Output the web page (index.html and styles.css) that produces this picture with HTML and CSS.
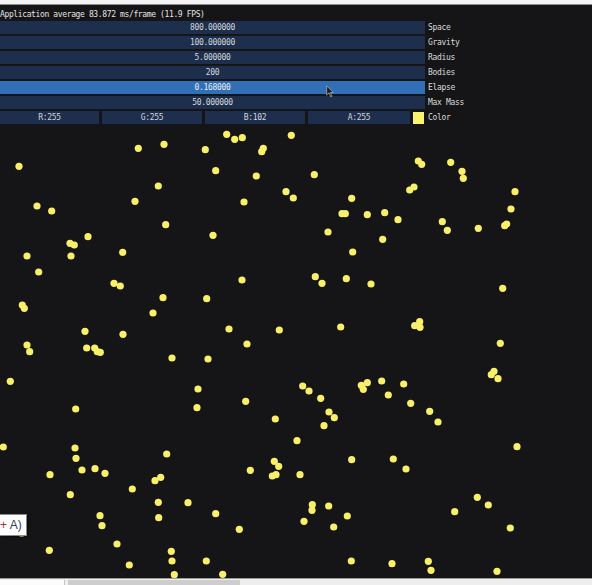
FILE: index.html
```html
<!DOCTYPE html>
<html>
<head>
<meta charset="utf-8">
<link rel="stylesheet" href="styles.css">
</head>
<body>
<div class="topbar"></div>
<div class="screen">
  <div class="panel">
    <div class="fps">Application average 83.872 ms/frame (11.9 FPS)</div>
    <div class="rows">
      <div class="row"><div class="bar">800.000000</div><span class="label">Space</span></div>
      <div class="row"><div class="bar">100.000000</div><span class="label">Gravity</span></div>
      <div class="row"><div class="bar">5.000000</div><span class="label">Radius</span></div>
      <div class="row"><div class="bar">200</div><span class="label">Bodies</span></div>
      <div class="row"><div class="bar active">0.168000</div><span class="label">Elapse</span></div>
      <div class="row"><div class="bar">50.000000</div><span class="label">Max Mass</span></div>
      <div class="row color-row">
        <div class="chan chan-r">R:255</div>
        <div class="chan">G:255</div>
        <div class="chan">B:102</div>
        <div class="chan chan-a">A:255</div>
        <div class="swatch"></div>
        <span class="label">Color</span>
      </div>
    </div>
  </div>
  <svg class="canvas" viewBox="0 125 592 453" width="592" height="453">
    <g class="bodies">
      <circle cx="138.3" cy="148.3" r="3.6"/><circle cx="164" cy="144.3" r="3.6"/><circle cx="19" cy="166.3" r="3.6"/>
      <circle cx="158.3" cy="186" r="3.6"/><circle cx="37" cy="206" r="3.6"/><circle cx="51.7" cy="211" r="3.6"/>
      <circle cx="135" cy="201.3" r="3.6"/><circle cx="165.7" cy="224.7" r="3.6"/><circle cx="88" cy="236.7" r="3.6"/>
      <circle cx="70" cy="243.3" r="3.6"/><circle cx="74.3" cy="245" r="3.6"/><circle cx="27" cy="256" r="3.6"/>
      <circle cx="71" cy="256" r="3.6"/><circle cx="122.7" cy="252.3" r="3.6"/><circle cx="38.7" cy="272" r="3.6"/>
      <circle cx="114" cy="283.3" r="3.6"/><circle cx="120.3" cy="286" r="3.6"/><circle cx="22.3" cy="305" r="3.6"/>
      <circle cx="24.3" cy="308.3" r="3.6"/><circle cx="163" cy="297.7" r="3.6"/><circle cx="153" cy="313" r="3.6"/>
      <circle cx="85" cy="331.3" r="3.6"/><circle cx="123" cy="334.3" r="3.6"/><circle cx="27" cy="345" r="3.6"/>
      <circle cx="29.7" cy="351.7" r="3.6"/><circle cx="86.7" cy="348" r="3.6"/><circle cx="94.7" cy="348" r="3.6"/>
      <circle cx="97.3" cy="351.7" r="3.6"/><circle cx="100.3" cy="352.3" r="3.6"/>

      <circle cx="226.7" cy="134.3" r="3.6"/><circle cx="234.7" cy="139.3" r="3.6"/><circle cx="242.3" cy="137.7" r="3.6"/>
      <circle cx="291.3" cy="135.3" r="3.6"/><circle cx="205.3" cy="149.7" r="3.6"/><circle cx="263.3" cy="148.3" r="3.6"/>
      <circle cx="261.7" cy="151.7" r="3.6"/><circle cx="215.7" cy="170.7" r="3.6"/><circle cx="256.3" cy="176" r="3.6"/>
      <circle cx="314.3" cy="174.7" r="3.6"/><circle cx="286" cy="191.7" r="3.6"/><circle cx="293.3" cy="198" r="3.6"/>
      <circle cx="244" cy="202" r="3.6"/><circle cx="351.7" cy="198.3" r="3.6"/><circle cx="342" cy="213.7" r="3.6"/>
      <circle cx="345.3" cy="213.7" r="3.6"/><circle cx="367.3" cy="214.7" r="3.6"/><circle cx="384.7" cy="212.7" r="3.6"/>
      <circle cx="213" cy="235.3" r="3.6"/><circle cx="328" cy="232" r="3.6"/><circle cx="382.7" cy="239.3" r="3.6"/>
      <circle cx="352.7" cy="252" r="3.6"/><circle cx="242" cy="280" r="3.6"/><circle cx="315.3" cy="276.7" r="3.6"/>
      <circle cx="322" cy="283.3" r="3.6"/><circle cx="346.3" cy="278.7" r="3.6"/><circle cx="371" cy="284" r="3.6"/>
      <circle cx="206.7" cy="298.7" r="3.6"/><circle cx="229" cy="329" r="3.6"/><circle cx="279.3" cy="330" r="3.6"/>
      <circle cx="340.7" cy="327" r="3.6"/><circle cx="247" cy="344" r="3.6"/>

      <circle cx="418.3" cy="161" r="3.6"/><circle cx="421.7" cy="164.3" r="3.6"/><circle cx="450.7" cy="162.3" r="3.6"/>
      <circle cx="462" cy="171.3" r="3.6"/><circle cx="463.3" cy="178.3" r="3.6"/><circle cx="414" cy="187" r="3.6"/>
      <circle cx="409.7" cy="190" r="3.6"/><circle cx="515" cy="191.7" r="3.6"/><circle cx="511" cy="209" r="3.6"/>
      <circle cx="398" cy="219.7" r="3.6"/><circle cx="442.3" cy="221.7" r="3.6"/><circle cx="447.3" cy="230.3" r="3.6"/>
      <circle cx="478.3" cy="228.3" r="3.6"/><circle cx="506.7" cy="224" r="3.6"/><circle cx="504.7" cy="225.7" r="3.6"/>
      <circle cx="502.7" cy="288.3" r="3.6"/><circle cx="419.7" cy="321.7" r="3.6"/><circle cx="414.7" cy="325.7" r="3.6"/>
      <circle cx="420" cy="327.3" r="3.6"/><circle cx="500.3" cy="343.3" r="3.6"/>

      <circle cx="172" cy="358" r="3.6"/><circle cx="10.3" cy="381.3" r="3.6"/><circle cx="198" cy="389" r="3.6"/>
      <circle cx="197" cy="407.7" r="3.6"/><circle cx="75.7" cy="409" r="3.6"/><circle cx="3.3" cy="447" r="3.6"/>
      <circle cx="75" cy="448" r="3.6"/><circle cx="76" cy="458.3" r="3.6"/><circle cx="50" cy="474.7" r="3.6"/>
      <circle cx="82" cy="470" r="3.6"/><circle cx="95" cy="468.7" r="3.6"/><circle cx="105" cy="473.3" r="3.6"/>
      <circle cx="166.7" cy="454" r="3.6"/><circle cx="155" cy="480.7" r="3.6"/><circle cx="160.7" cy="477.3" r="3.6"/>
      <circle cx="70.3" cy="494.7" r="3.6"/><circle cx="132.3" cy="489" r="3.6"/><circle cx="158.3" cy="502.3" r="3.6"/>
      <circle cx="158.7" cy="517.7" r="3.6"/><circle cx="188" cy="502.7" r="3.6"/><circle cx="100" cy="515.7" r="3.6"/>
      <circle cx="102" cy="525.7" r="3.6"/><circle cx="21.7" cy="533.3" r="3.6"/><circle cx="117" cy="544" r="3.6"/>
      <circle cx="49.3" cy="550.3" r="3.6"/><circle cx="171.3" cy="551.3" r="3.6"/><circle cx="172" cy="561" r="3.6"/>
      <circle cx="129.3" cy="565" r="3.6"/><circle cx="174.3" cy="574.7" r="3.6"/>

      <circle cx="208" cy="359" r="3.6"/><circle cx="245.7" cy="401.3" r="3.6"/><circle cx="302.7" cy="386" r="3.6"/>
      <circle cx="309" cy="391" r="3.6"/><circle cx="320.7" cy="398.3" r="3.6"/><circle cx="329" cy="412" r="3.6"/>
      <circle cx="334.3" cy="417.7" r="3.6"/><circle cx="324" cy="425.7" r="3.6"/><circle cx="275.3" cy="419" r="3.6"/>
      <circle cx="297" cy="440.7" r="3.6"/><circle cx="361.3" cy="385.3" r="3.6"/><circle cx="363.3" cy="389.3" r="3.6"/>
      <circle cx="367.3" cy="382.7" r="3.6"/><circle cx="381.7" cy="381" r="3.6"/><circle cx="388.3" cy="395" r="3.6"/>
      <circle cx="351.7" cy="459.7" r="3.6"/><circle cx="393.3" cy="459" r="3.6"/><circle cx="250.3" cy="470.3" r="3.6"/>
      <circle cx="274.3" cy="461.3" r="3.6"/><circle cx="278.7" cy="466.3" r="3.6"/><circle cx="272.3" cy="476" r="3.6"/>
      <circle cx="276" cy="474.7" r="3.6"/><circle cx="300" cy="474.7" r="3.6"/><circle cx="312.3" cy="504.7" r="3.6"/>
      <circle cx="312" cy="510.3" r="3.6"/><circle cx="328.7" cy="506" r="3.6"/><circle cx="347.3" cy="516" r="3.6"/>
      <circle cx="304" cy="521.3" r="3.6"/><circle cx="333.7" cy="527" r="3.6"/><circle cx="215.7" cy="513.7" r="3.6"/>
      <circle cx="239.3" cy="529.3" r="3.6"/><circle cx="206.3" cy="561" r="3.6"/><circle cx="222.7" cy="574.3" r="3.6"/>
      <circle cx="351.3" cy="561" r="3.6"/><circle cx="392" cy="563.7" r="3.6"/>

      <circle cx="494" cy="371.3" r="3.6"/><circle cx="491.3" cy="374.7" r="3.6"/><circle cx="498" cy="378.7" r="3.6"/>
      <circle cx="403.7" cy="384" r="3.6"/><circle cx="410.7" cy="403.3" r="3.6"/><circle cx="429.7" cy="411.3" r="3.6"/>
      <circle cx="438" cy="422" r="3.6"/><circle cx="517" cy="446.7" r="3.6"/><circle cx="406" cy="469" r="3.6"/>
      <circle cx="477.3" cy="497.3" r="3.6"/><circle cx="488.3" cy="505" r="3.6"/><circle cx="454.7" cy="511.7" r="3.6"/>
      <circle cx="510.3" cy="528" r="3.6"/><circle cx="428.3" cy="561.3" r="3.6"/><circle cx="431" cy="570.3" r="3.6"/>
      <circle cx="497" cy="571.3" r="3.6"/>
    </g>
  </svg>
  <svg class="cursor" viewBox="0 0 12 19" width="8" height="13">
    <path d="M1 1 L1 15 L4.5 11.5 L7 17.5 L9 16.6 L6.6 11 L11 11 Z" fill="#1c1c1c" stroke="#bdbdbd" stroke-width="1"/>
  </svg>
  <div class="tooltip"><span class="plus">+</span> A)</div>
</div>
<div class="bottombar">
  <div class="tab"></div>
  <div class="thumb"></div>
</div>
</body>
</html>
```

FILE: styles.css
```css
html, body {
  margin: 0;
  padding: 0;
}

body {
  width: 592px;
  height: 585px;
  overflow: hidden;
  background: #ececec;
  font-family: "DejaVu Sans Mono", "Liberation Mono", monospace;
}

.topbar {
  height: 4px;
  background: #f4f4f4;
  border-bottom: 1px solid #8e8e8e;
}

.screen {
  position: relative;
  height: 573px;
  background: #151517;
  overflow: hidden;
}

.panel {
  padding-bottom: 1px;
}

.fps {
  height: 12px;
  padding-top: 4px;
  line-height: 12px;
  font-size: 8px;
  letter-spacing: -0.37px;
  color: #e4e4e4;
  white-space: nowrap;
}

.rows {
  display: flex;
  flex-direction: column;
  gap: 2px;
}

.row {
  display: flex;
  align-items: center;
  height: 13px;
}

.bar {
  width: 425px;
  height: 13px;
  line-height: 14px;
  background: #1d2f4c;
  color: #d2d6dc;
  text-align: center;
  font-size: 8px;
  letter-spacing: -0.3px;
}

.bar.active {
  background: #3170b6;
  color: #e8ecf2;
}

.label {
  margin-left: 3px;
  font-size: 8px;
  letter-spacing: -0.3px;
  color: #dcdcdc;
  line-height: 14px;
  white-space: nowrap;
}

.color-row {
  gap: 3px;
}

.chan {
  width: 100px;
  height: 13px;
  line-height: 14px;
  background: #1d2f4c;
  color: #d2d6dc;
  text-align: center;
  font-size: 8px;
  letter-spacing: -0.3px;
}

.chan-r {
  width: 99px;
}

.chan-a {
  width: 102px;
}

.swatch {
  width: 11px;
  height: 12px;
  background: #fbf36b;
}

.color-row .label {
  margin-left: 1px;
}

.canvas {
  display: block;
}

.bodies circle {
  fill: #f8f068;
}

.cursor {
  position: absolute;
  left: 326px;
  top: 80px;
}

.tooltip {
  position: absolute;
  left: 0;
  top: 509px;
  width: 27px;
  height: 22px;
  box-sizing: border-box;
  background: #fdfdfd;
  border: 1px solid #8a8a8a;
  border-left: none;
  box-shadow: 1px 1px 2px rgba(0, 0, 0, 0.6);
  font-family: "Liberation Sans", Arial, sans-serif;
  font-size: 12px;
  line-height: 20px;
  color: #34405a;
  padding-left: 0;
  white-space: nowrap;
}

.plus {
  color: #b0283c;
}

.bottombar {
  display: flex;
  align-items: flex-end;
  gap: 3px;
  height: 6px;
  border-top: 1px solid #9a9a9a;
  background: #eeeeee;
}

.tab {
  width: 64px;
  height: 5px;
  background: #fbfbfb;
  border-right: 1px solid #c4c4c4;
}

.thumb {
  width: 172px;
  height: 5px;
  background: #cdcdcd;
}
```
